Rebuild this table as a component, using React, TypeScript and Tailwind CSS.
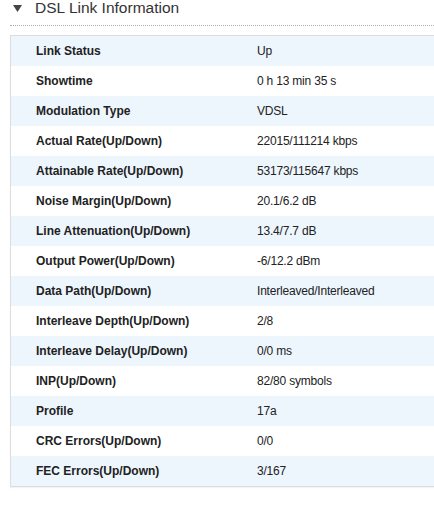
const ROWS: [string, string][] = [
  ["Link Status", "Up"],
  ["Showtime", "0 h 13 min 35 s"],
  ["Modulation Type", "VDSL"],
  ["Actual Rate(Up/Down)", "22015/111214 kbps"],
  ["Attainable Rate(Up/Down)", "53173/115647 kbps"],
  ["Noise Margin(Up/Down)", "20.1/6.2 dB"],
  ["Line Attenuation(Up/Down)", "13.4/7.7 dB"],
  ["Output Power(Up/Down)", "-6/12.2 dBm"],
  ["Data Path(Up/Down)", "Interleaved/Interleaved"],
  ["Interleave Depth(Up/Down)", "2/8"],
  ["Interleave Delay(Up/Down)", "0/0 ms"],
  ["INP(Up/Down)", "82/80 symbols"],
  ["Profile", "17a"],
  ["CRC Errors(Up/Down)", "0/0"],
  ["FEC Errors(Up/Down)", "3/167"],
];

export default function App() {
  return (
    <div className="w-[434px] h-[510px] overflow-hidden bg-white font-['Liberation_Sans',Arial,sans-serif] text-[#222]">
      <div className="flex items-center h-[18px] -mt-[1px] pl-[13px]">
        <svg width="9" height="7" viewBox="0 0 9 7" className="mt-[1px]">
          <polygon points="0,0 9,0 4.5,7" fill="#444" />
        </svg>
        <span className="ml-[13px] text-[15.5px] leading-none text-[#333]">DSL Link Information</span>
      </div>
      <div className="ml-[10px] mt-[8px] border-t border-dotted border-[#aaa]" />
      <div className="ml-[10px] mt-[9px] w-[440px] border border-[#ddd] shadow-[0_1px_1px_rgba(0,0,0,0.05)]">
        {ROWS.map(([label, value], i) => (
          <div
            key={label}
            className={`flex items-center h-[30px] text-[12px] ${i % 2 === 0 ? "bg-[#edf5fd]" : "bg-white"}`}
          >
            <div className="w-[246px] pl-[25px] font-bold">{label}</div>
            <div className="tracking-[-0.2px]">{value}</div>
          </div>
        ))}
      </div>
    </div>
  );
}
